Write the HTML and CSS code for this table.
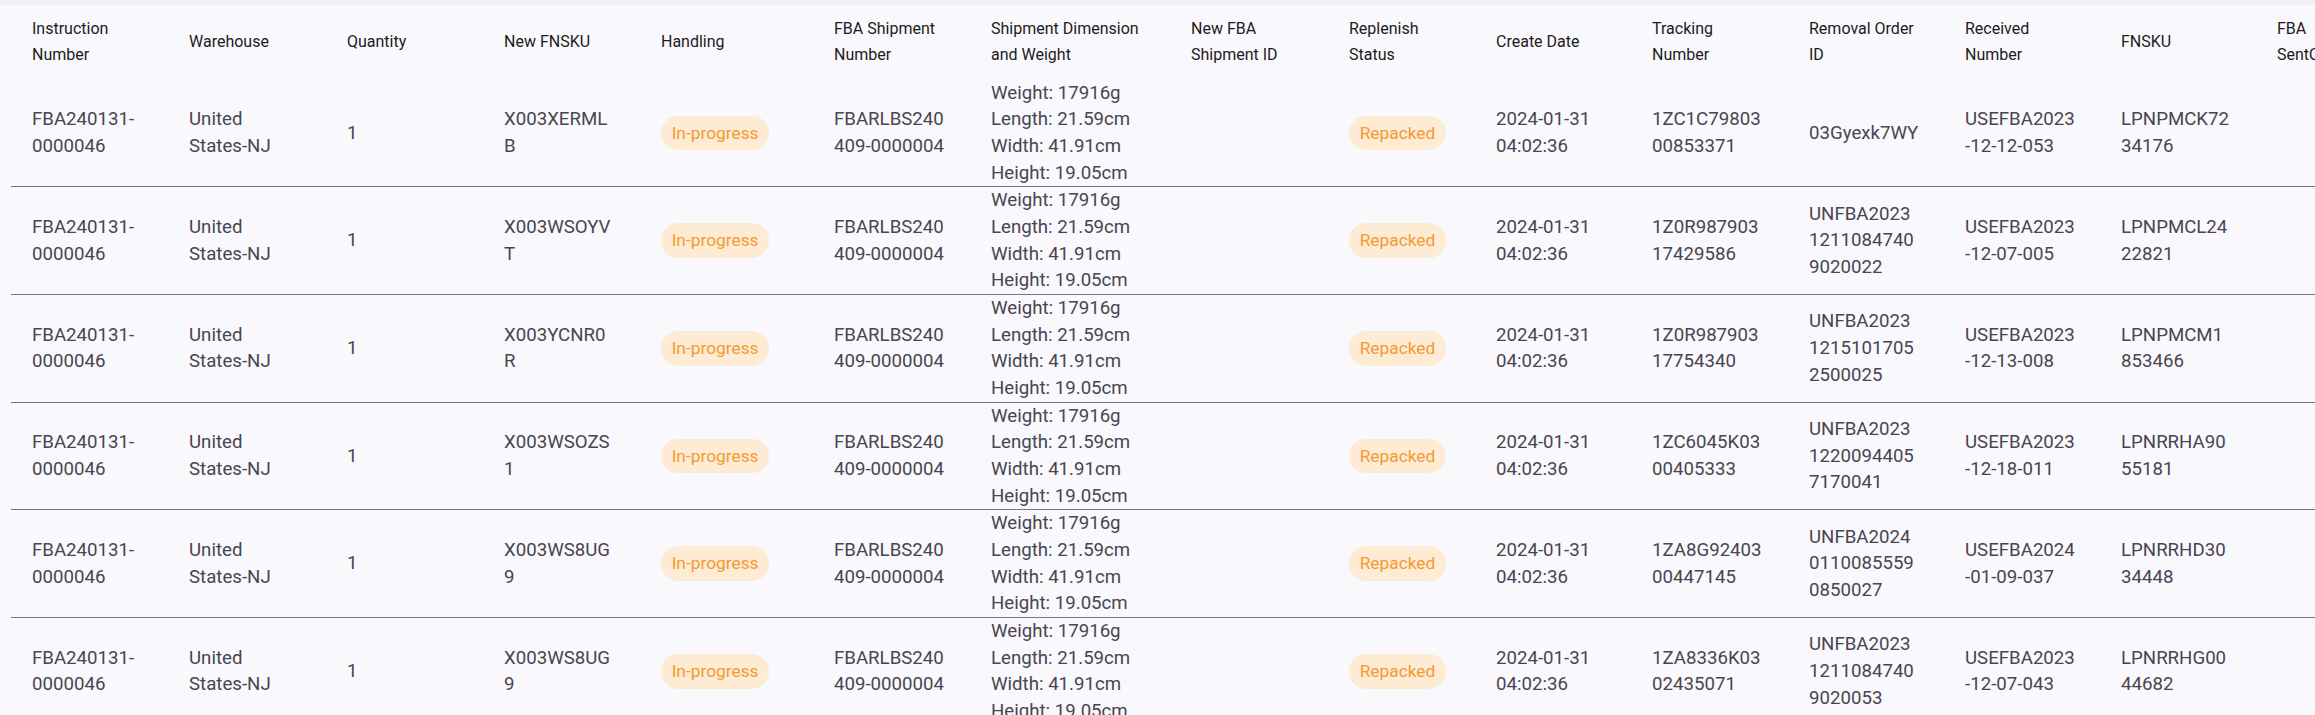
FILE: index.html
```html
<!DOCTYPE html>
<html>
<head>
    <meta charset="utf-8">
    <link rel="stylesheet" href="styles.css">
</head>
<body>
<div class="topbar"></div>
<div class="table-wrap">
<table class="table">
    <colgroup>
        <col class="c-std">
        <col class="c-wide1">
        <col class="c-std">
        <col class="c-std">
        <col class="c-handling">
        <col class="c-std">
        <col class="c-dim">
        <col class="c-wide1">
        <col class="c-status">
        <col class="c-narrow1">
        <col class="c-std">
        <col class="c-narrow1">
        <col class="c-narrow1">
        <col class="c-narrow1">
        <col class="c-last">
    </colgroup>
    <thead>
    <tr>
        <th>Instruction Number</th>
        <th>Warehouse</th>
        <th>Quantity</th>
        <th>New FNSKU</th>
        <th>Handling</th>
        <th>FBA Shipment Number</th>
        <th>Shipment Dimension and Weight</th>
        <th>New FBA Shipment ID</th>
        <th>Replenish Status</th>
        <th>Create Date</th>
        <th>Tracking Number</th>
        <th>Removal Order ID</th>
        <th>Received Number</th>
        <th>FNSKU</th>
        <th>FBA SentQuantity</th>
    </tr>
    </thead>
    <tbody>
    <tr>
        <td>FBA240131-0000046</td>
        <td>United States-NJ</td>
        <td>1</td>
        <td>X003XERMLB</td>
        <td><span class="pill">In-progress</span></td>
        <td>FBARLBS240409-0000004</td>
        <td>Weight: 17916g<br>Length: 21.59cm<br>Width: 41.91cm<br>Height: 19.05cm</td>
        <td></td>
        <td><span class="pill">Repacked</span></td>
        <td>2024-01-31 04:02:36</td>
        <td>1ZC1C7980300853371</td>
        <td>03Gyexk7WY</td>
        <td>USEFBA2023-12-12-053</td>
        <td>LPNPMCK7234176</td>
        <td></td>
    </tr>
    <tr>
        <td>FBA240131-0000046</td>
        <td>United States-NJ</td>
        <td>1</td>
        <td>X003WSOYVT</td>
        <td><span class="pill">In-progress</span></td>
        <td>FBARLBS240409-0000004</td>
        <td>Weight: 17916g<br>Length: 21.59cm<br>Width: 41.91cm<br>Height: 19.05cm</td>
        <td></td>
        <td><span class="pill">Repacked</span></td>
        <td>2024-01-31 04:02:36</td>
        <td>1Z0R98790317429586</td>
        <td>UNFBA202312110847409020022</td>
        <td>USEFBA2023-12-07-005</td>
        <td>LPNPMCL2422821</td>
        <td></td>
    </tr>
    <tr>
        <td>FBA240131-0000046</td>
        <td>United States-NJ</td>
        <td>1</td>
        <td>X003YCNR0R</td>
        <td><span class="pill">In-progress</span></td>
        <td>FBARLBS240409-0000004</td>
        <td>Weight: 17916g<br>Length: 21.59cm<br>Width: 41.91cm<br>Height: 19.05cm</td>
        <td></td>
        <td><span class="pill">Repacked</span></td>
        <td>2024-01-31 04:02:36</td>
        <td>1Z0R98790317754340</td>
        <td>UNFBA202312151017052500025</td>
        <td>USEFBA2023-12-13-008</td>
        <td>LPNPMCM1853466</td>
        <td></td>
    </tr>
    <tr>
        <td>FBA240131-0000046</td>
        <td>United States-NJ</td>
        <td>1</td>
        <td>X003WSOZS1</td>
        <td><span class="pill">In-progress</span></td>
        <td>FBARLBS240409-0000004</td>
        <td>Weight: 17916g<br>Length: 21.59cm<br>Width: 41.91cm<br>Height: 19.05cm</td>
        <td></td>
        <td><span class="pill">Repacked</span></td>
        <td>2024-01-31 04:02:36</td>
        <td>1ZC6045K0300405333</td>
        <td>UNFBA202312200944057170041</td>
        <td>USEFBA2023-12-18-011</td>
        <td>LPNRRHA9055181</td>
        <td></td>
    </tr>
    <tr>
        <td>FBA240131-0000046</td>
        <td>United States-NJ</td>
        <td>1</td>
        <td>X003WS8UG9</td>
        <td><span class="pill">In-progress</span></td>
        <td>FBARLBS240409-0000004</td>
        <td>Weight: 17916g<br>Length: 21.59cm<br>Width: 41.91cm<br>Height: 19.05cm</td>
        <td></td>
        <td><span class="pill">Repacked</span></td>
        <td>2024-01-31 04:02:36</td>
        <td>1ZA8G9240300447145</td>
        <td>UNFBA202401100855590850027</td>
        <td>USEFBA2024-01-09-037</td>
        <td>LPNRRHD3034448</td>
        <td></td>
    </tr>
    <tr>
        <td>FBA240131-0000046</td>
        <td>United States-NJ</td>
        <td>1</td>
        <td>X003WS8UG9</td>
        <td><span class="pill">In-progress</span></td>
        <td>FBARLBS240409-0000004</td>
        <td>Weight: 17916g<br>Length: 21.59cm<br>Width: 41.91cm<br>Height: 19.05cm</td>
        <td></td>
        <td><span class="pill">Repacked</span></td>
        <td>2024-01-31 04:02:36</td>
        <td>1ZA8336K0302435071</td>
        <td>UNFBA202312110847409020053</td>
        <td>USEFBA2023-12-07-043</td>
        <td>LPNRRHG0044682</td>
        <td></td>
    </tr>
    </tbody>
</table>
</div>
</body>
</html>
```

FILE: styles.css
```css
html, body {
    margin: 0;
    height: 100%;
    overflow: hidden;
    background-color: #f9f8fd;
}

body {
    font-family: Roboto, "Liberation Sans", sans-serif;
    color: #444;
}

.topbar {
    height: 5px;
    background-color: #f1f0f5;
}

.table-wrap {
    padding-left: 11px;
    overflow: hidden;
}

.table {
    border-collapse: collapse;
    table-layout: fixed;
    width: 2405px;
}

.c-std { width: 157px; }
.c-wide1 { width: 158px; }
.c-handling { width: 173px; }
.c-dim { width: 200px; }
.c-status { width: 147px; }
.c-narrow1 { width: 156px; }
.c-last { width: 160px; }

.table th, .table td {
    box-sizing: border-box;
    padding: 0 25px 0 21px;
    text-align: left;
    vertical-align: middle;
    overflow-wrap: anywhere;
}

.table th {
    font-size: 16px;
    font-weight: 400;
    line-height: 26.67px;
    color: #1d1b20;
    padding-top: 10.67px;
    padding-bottom: 10.67px;
}

.table td {
    font-size: 18.67px;
    line-height: 26.67px;
    height: 106.67px;
    color: #49454f;
}

.table tbody tr {
    border-bottom: 1px solid #79747e;
}

.pill {
    display: inline-block;
    height: 34.67px;
    line-height: 34.67px;
    padding: 0 10.67px;
    border-radius: 17.33px;
    background-color: #fdebd3;
    color: #f39a33;
    font-size: 17.33px;
    white-space: nowrap;
}
```
